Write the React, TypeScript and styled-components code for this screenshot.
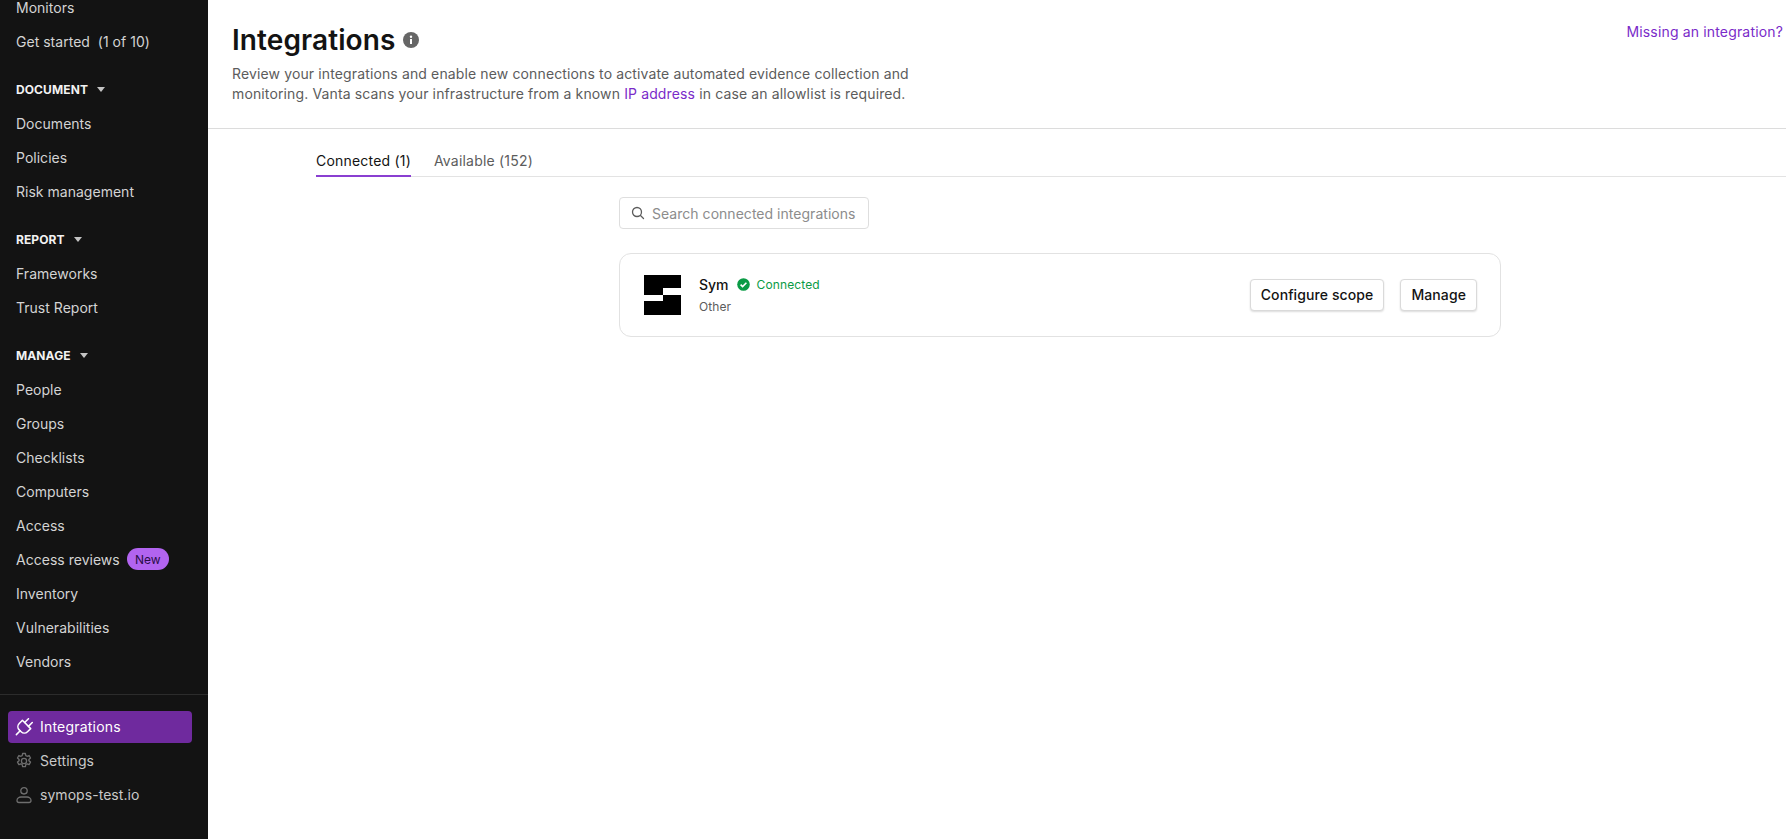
import React from "react";
import styled, { createGlobalStyle } from "styled-components";

const Global = createGlobalStyle`
  html, body { margin: 0; padding: 0; height: 100%; background: #fff; }
  body { font-family: Inter, "Liberation Sans", sans-serif; -webkit-font-smoothing: antialiased; }
  #root { height: 100%; }
`;

const Page = styled.div`
  display: flex;
  width: 1786px;
  height: 839px;
  overflow: hidden;
`;

const Sidebar = styled.aside`
  width: 208px;
  flex: none;
  height: 839px;
  background: #131313;
  display: flex;
  flex-direction: column;
`;

const NavScroll = styled.div`
  flex: none;
  overflow: hidden;
  border-bottom: 1px solid #2c2c2c;
  box-sizing: border-box;
  height: 695px;
`;

const NavList = styled.nav`
  margin-top: -10px;
  display: flex;
  flex-direction: column;
`;

const NavItem = styled.a`
  height: 34px;
  display: flex;
  align-items: center;
  gap: 7px;
  padding-left: 16px;
  font-size: 14px;
  letter-spacing: 0.02px;
  color: #d4d4d4;
  white-space: pre;
`;

const SectionHead = styled.div`
  height: 34px;
  margin-top: 14px;
  display: flex;
  align-items: center;
  padding-left: 16px;
  gap: 9px;
  font-size: 12px;
  font-weight: 700;
  letter-spacing: 0.1px;
  color: #f2f2f2;
`;

const Caret = styled.span`
  width: 0;
  height: 0;
  border-left: 4.5px solid transparent;
  border-right: 4.5px solid transparent;
  border-top: 5px solid #c4c4c4;
`;

const NewBadge = styled.span`
  height: 22px;
  width: 42px;
  border-radius: 11px;
  background: #b264f0;
  color: #2a0d48;
  font-size: 12px;
  display: flex;
  align-items: center;
  justify-content: center;
`;

const Bottom = styled.div`
  padding: 16px 16px 0 8px;
  display: flex;
  flex-direction: column;
`;

const BottomItem = styled.a<{ $active?: boolean }>`
  height: ${(p) => (p.$active ? "32px" : "34px")};
  margin-bottom: ${(p) => (p.$active ? "1px" : "0")};
  box-sizing: border-box;
  padding-bottom: 1px;
  display: flex;
  align-items: center;
  gap: 7px;
  padding-left: 7px;
  border-radius: 4px;
  font-size: 14px;
  letter-spacing: ${(p) => (p.$active ? "0.2px" : "0.05px")};
  background: ${(p) => (p.$active ? "#6f2a9e" : "transparent")};
  color: ${(p) => (p.$active ? "#ffffff" : "#c9c9c9")};
`;

const Main = styled.main`
  flex: 1;
  min-width: 0;
  display: flex;
  flex-direction: column;
`;

const Header = styled.header`
  height: 129px;
  box-sizing: border-box;
  border-bottom: 1px solid #dcdcdc;
  padding: 20px 3px 0 24px;
  display: flex;
  justify-content: space-between;
`;

const TitleRow = styled.div`
  display: flex;
  align-items: center;
  gap: 8px;
  height: 40px;
`;

const Title = styled.h1`
  margin: 0;
  font-size: 28px;
  line-height: 40px;
  font-weight: 600;
  color: #131313;
  letter-spacing: 0.1px;
`;

const Description = styled.p`
  margin: 4px 0 0;
  width: 720px;
  font-size: 14px;
  line-height: 20px;
  letter-spacing: 0.13px;
  color: #5c5c5c;
`;

const PurpleLink = styled.a`
  color: #7a2bc9;
`;

const MissingLink = styled.a`
  color: #7a2bc9;
  font-size: 14px;
  line-height: 20px;
  letter-spacing: 0.16px;
  margin-top: 2px;
`;

const Content = styled.div`
  padding: 17px 0 0 108px;
  display: flex;
  flex-direction: column;
`;

const Tabs = styled.div`
  display: flex;
  gap: 23px;
  height: 31px;
  box-sizing: border-box;
  border-bottom: 1px solid #e3e3e3;
`;

const Tab = styled.div<{ $active?: boolean }>`
  height: 31px;
  box-sizing: border-box;
  padding-top: 5px;
  font-size: 14px;
  line-height: 20px;
  letter-spacing: 0.2px;
  color: ${(p) => (p.$active ? "#131313" : "#5c5c5c")};
  border-bottom: 2px solid ${(p) => (p.$active ? "#8a3fd1" : "transparent")};
`;

const Body = styled.div`
  padding: 20px 0 0 303px;
  display: flex;
  flex-direction: column;
`;

const Search = styled.div`
  width: 250px;
  height: 32px;
  box-sizing: border-box;
  border: 1px solid #dedede;
  border-radius: 4px;
  display: flex;
  align-items: center;
  gap: 7px;
  padding-left: 11px;
  font-size: 14px;
  letter-spacing: 0.03px;
  color: #8c8c8c;
`;

const Card = styled.div`
  margin-top: 24px;
  width: 882px;
  height: 84px;
  box-sizing: border-box;
  border: 1px solid #e2e2e2;
  border-radius: 12px;
  padding: 0 23px 0 24px;
  display: flex;
  align-items: center;
`;

const Info = styled.div`
  margin-left: 18px;
  flex: 1;
  display: flex;
  flex-direction: column;
  gap: 3px;
`;

const NameRow = styled.div`
  display: flex;
  align-items: center;
  gap: 8px;
`;

const Name = styled.span`
  font-size: 14px;
  line-height: 20px;
  font-weight: 500;
  color: #131313;
`;

const Status = styled.span`
  display: flex;
  align-items: center;
  gap: 7px;
  font-size: 12px;
  letter-spacing: 0.12px;
  color: #0a9b45;
`;

const Category = styled.span`
  font-size: 12px;
  line-height: 18px;
  letter-spacing: 0.1px;
  color: #5c5c5c;
`;

const Button = styled.button`
  height: 32px;
  box-sizing: border-box;
  background: #fff;
  border: 1px solid #dadada;
  border-radius: 4px;
  box-shadow: 0 1px 2px rgba(0, 0, 0, 0.14);
  padding: 0 10px 2px;
  margin-left: 16px;
  font-family: inherit;
  font-size: 14px;
  font-weight: 500;
  letter-spacing: 0.1px;
  color: #131313;
`;

const Item = ({ children }: { children: React.ReactNode }) => <NavItem>{children}</NavItem>;

const Section = ({ label }: { label: string }) => (
  <SectionHead>
    {label}
    <Caret />
  </SectionHead>
);

const PlugIcon = () => (
  <svg width="18" height="18" viewBox="0 0 20 20" fill="none" stroke="#fff" strokeWidth="1.7" strokeLinecap="round" strokeLinejoin="round">
    <g transform="rotate(45 10 10) translate(-2 -2)">
      <path d="M12 24v-6" />
      <path d="M9 8V2" />
      <path d="M15 8V2" />
      <path d="M18.500 8v5a5 5 0 0 1-5 5h-3a5 5 0 0 1-5-5V8Z" />
    </g>
  </svg>
);

const GearIcon = () => (
  <svg width="18" height="18" viewBox="0 0 18 18" fill="none" stroke="#6e6e6e" strokeWidth="1.3" strokeLinejoin="round">
    <circle cx="9" cy="9" r="2.600" />
    <path d="M7.600 1.500h2.800l.4 2.100 1.300.7 2-.8 1.400 2.500-1.600 1.400v1.300l1.600 1.400-1.400 2.500-2-.8-1.300.7-.4 2.100H7.600l-.4-2.100-1.300-.7-2 .8-1.400-2.500 1.600-1.400V7.400L2.500 6l1.400-2.500 2 .8 1.300-.7z" />
  </svg>
);

const UserIcon = () => (
  <svg width="18" height="18" viewBox="0 0 18 18" fill="none" stroke="#6e6e6e" strokeWidth="1.3">
    <circle cx="9" cy="4.800" r="3.200" />
    <path d="M2 14.500c0-2 2-3.500 4-3.500h6c2 0 4 1.500 4 3.500 0 1.200-.8 2-2 2H4c-1.200 0-2-.8-2-2z" />
  </svg>
);

const InfoIcon = () => (
  <svg width="16" height="16" viewBox="0 0 16 16">
    <circle cx="8" cy="8" r="8" fill="#666" />
    <rect x="7" y="7" width="2" height="5" fill="#fff" />
    <circle cx="8" cy="4.800" r="1.200" fill="#fff" />
  </svg>
);

const SearchIcon = () => (
  <svg width="14" height="14" viewBox="0 0 14 14" fill="none" stroke="#5c5c5c" strokeWidth="1.3" strokeLinecap="round">
    <circle cx="6" cy="6" r="4.500" />
    <path d="M9.500 9.500L12.500 12.500" />
  </svg>
);

const CheckIcon = () => (
  <svg width="13" height="13" viewBox="0 0 13 13">
    <circle cx="6.500" cy="6.500" r="6.300" fill="#0a9b45" />
    <path d="M3.600 6.600l2 2 3.800-3.800" fill="none" stroke="#fff" strokeWidth="1.600" />
  </svg>
);

const SymLogo = () => (
  <svg width="37" height="40" viewBox="0 0 37 40">
    <path d="M0 0h37v13H19v7H0z" fill="#000" />
    <path d="M19 20h18v20H0V26h19z" fill="#000" />
  </svg>
);

export default function App() {
  return (
    <Page>
      <Global />
      <Sidebar>
        <NavScroll>
          <NavList>
            <Item>Monitors</Item>
            <Item>{"Get started  (1 of 10)"}</Item>
            <Section label="DOCUMENT" />
            <Item>Documents</Item>
            <Item>Policies</Item>
            <Item>Risk management</Item>
            <Section label="REPORT" />
            <Item>Frameworks</Item>
            <Item>Trust Report</Item>
            <Section label="MANAGE" />
            <Item>People</Item>
            <Item>Groups</Item>
            <Item>Checklists</Item>
            <Item>Computers</Item>
            <Item>Access</Item>
            <Item>
              Access reviews<NewBadge>New</NewBadge>
            </Item>
            <Item>Inventory</Item>
            <Item>Vulnerabilities</Item>
            <Item>Vendors</Item>
          </NavList>
        </NavScroll>
        <Bottom>
          <BottomItem $active>
            <PlugIcon />
            Integrations
          </BottomItem>
          <BottomItem>
            <GearIcon />
            Settings
          </BottomItem>
          <BottomItem>
            <UserIcon />
            symops-test.io
          </BottomItem>
        </Bottom>
      </Sidebar>
      <Main>
        <Header>
          <div>
            <TitleRow>
              <Title>Integrations</Title>
              <InfoIcon />
            </TitleRow>
            <Description>
              Review your integrations and enable new connections to activate automated evidence collection and
              monitoring. Vanta scans your infrastructure from a known <PurpleLink>IP address</PurpleLink> in case an
              allowlist is required.
            </Description>
          </div>
          <MissingLink>Missing an integration?</MissingLink>
        </Header>
        <Content>
          <Tabs>
            <Tab $active>Connected (1)</Tab>
            <Tab>Available (152)</Tab>
          </Tabs>
          <Body>
            <Search>
              <SearchIcon />
              Search connected integrations
            </Search>
            <Card>
              <SymLogo />
              <Info>
                <NameRow>
                  <Name>Sym</Name>
                  <Status>
                    <CheckIcon />
                    Connected
                  </Status>
                </NameRow>
                <Category>Other</Category>
              </Info>
              <Button>Configure scope</Button>
              <Button>Manage</Button>
            </Card>
          </Body>
        </Content>
      </Main>
    </Page>
  );
}
